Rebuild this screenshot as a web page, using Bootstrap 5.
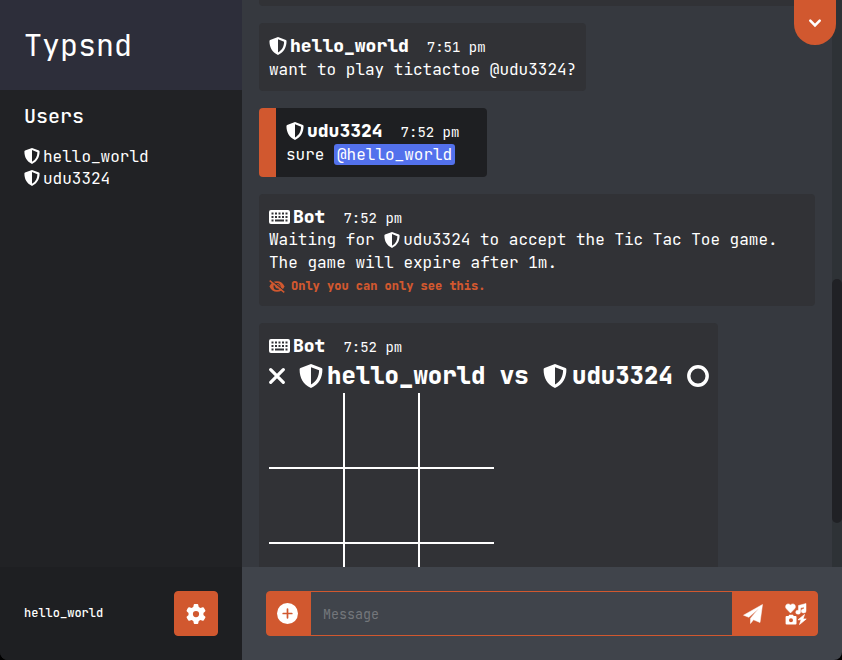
<!DOCTYPE html>
<html lang="en">
<head>
<meta charset="utf-8">
<title>Typsnd</title>
<link href="https://cdn.jsdelivr.net/npm/bootstrap@5.3.0/dist/css/bootstrap.min.css" rel="stylesheet">
<style>
:root{--accent:#d1582f}
body{font-family:"JetBrains Mono","DejaVu Sans Mono","Liberation Mono",monospace;font-size:16px;line-height:23px;color:#fff;background:#000;font-variant-ligatures:none}
svg{fill:currentColor;display:block;flex:none}
.app{height:660px;width:842px;border-radius:0 0 8px 8px}
.side{width:242px;background:#212225}
.brand{height:90px;background:#2d2e3a;font-size:30px;line-height:36px;padding-left:24px}
.users{padding:14px 24px 0}
.users h2{font-size:20px;line-height:24px;margin:0 0 17px;font-weight:500}
.user{height:22px;gap:3px}
.me{height:93px;background:#1e1f22;font-size:12px;font-weight:500;padding:0 24px}
.btn-accent{--bs-btn-bg:var(--accent);--bs-btn-color:#fff;--bs-btn-border-color:var(--accent);--bs-btn-border-radius:4px;background:var(--accent);color:#fff;padding:0;height:45px}
.gear{width:44px}
.feed{height:567px;background:#36393f;padding-left:17px}
.msg{background:#313236;border-radius:4px;padding:11px 10px 0;width:max-content;margin-bottom:17px}
.msg-old{height:6px;width:573px;border-radius:0 0 4px 4px;padding:0}
.msg-mention{background:#1e1f22;border-left:17px solid var(--accent)}
.who{font-size:18px;font-weight:800;line-height:24px;height:24px}
.msg-bot .who{margin-bottom:-1px}
.ico{margin-right:3px}
.stamp{font-size:14px;font-weight:400;margin-left:18px;position:relative;top:1px}
.ping{background:#5371ec;border-radius:3px;padding:1px 3px;line-height:19px;height:21px}
.hint{font-size:12px;font-weight:800;color:var(--accent);gap:6px;margin-top:1px}
.versus{font-size:24px;font-weight:800;height:37px;line-height:37px;white-space:pre}
.board{width:225px;display:grid;grid-template-columns:76px 75px 74px;grid-template-rows:76px 75px 74px;margin-top:-1px}
.board>i{border-right:2px solid #fff;border-bottom:2px solid #fff}
.board>i:nth-child(3n){border-right:0}
.track{width:10px;background:#2e3236;padding-top:279px}
.thumb{height:244px;border-radius:5px;background:#202125}
.jump{position:absolute;left:552px;top:0;width:42px;height:45px;border-radius:0 0 21px 21px;background:var(--accent)}
.compose{height:93px;background:#40444b;padding:24px}
.compose .input-group{height:45px}
.compose .btn-nudge{padding-right:2px}
.compose .form-control{background:#40444b;border-color:var(--accent);border-radius:0;font-size:13.33px;padding:0 12px;color:#fff}
.compose .form-control::placeholder{color:#74777b}
</style>
</head>
<body class="overflow-hidden">
<svg width="0" height="0" class="position-absolute">
<symbol id="shield" viewBox="0 0 16 16"><path fill-rule="evenodd" d="M8 0 15 2.6Q15.6 2.9 15.6 3.6C15.6 9 13.4 13.5 8 16 2.6 13.5.4 9 .4 3.6Q.4 2.9 1 2.6ZM8 2.1V13.7C11.8 11.5 13.300 8.300 13.400 4.200Z"/></symbol>
<symbol id="keys" viewBox="0 0 21 14"><path fill-rule="evenodd" d="M2 0H19Q21 0 21 2V12Q21 14 19 14H2Q0 14 0 12V2Q0 0 2 0ZM2.500 2.500V4.500H4.500V2.500ZM6 2.500V4.500H8V2.500ZM9.500 2.500V4.500H11.500V2.500ZM13 2.500V4.500H15V2.500ZM16.500 2.500V4.500H18.500V2.500ZM2.500 6V8H4.500V6ZM6 6V8H8V6ZM9.500 6V8H11.500V6ZM13 6V8H15V6ZM16.500 6V8H18.500V6ZM2.500 9.500V11.500H4.500V9.500ZM6 9.500V11.500H15V9.500ZM16.500 9.500V11.500H18.500V9.500Z"/></symbol>
</svg>
<div class="app d-flex overflow-hidden">
<aside class="side d-flex flex-column">
<div class="brand d-flex align-items-center">Typsnd</div>
<div class="users flex-grow-1">
<h2>Users</h2>
<div class="user d-flex align-items-center"><svg width="16" height="16"><use href="#shield"/></svg>hello_world</div>
<div class="user d-flex align-items-center"><svg width="16" height="16"><use href="#shield"/></svg>udu3324</div>
</div>
<div class="me d-flex align-items-center justify-content-between">hello_world
<button class="btn btn-accent gear d-flex align-items-center justify-content-center" aria-label="Settings"><svg width="20" height="20" viewBox="0 0 512 512"><path d="M495.900 166.600c3.200 8.700.5 18.400-6.400 24.600l-43.300 39.400c1.100 8.300 1.700 16.800 1.700 25.400s-.6 17.100-1.700 25.400l43.300 39.400c6.900 6.200 9.600 15.900 6.400 24.600-10 27-28 57-46 76-6 7-15 9-24 6l-55.700-17.700c-13.400 10.300-28.200 18.900-44 25.400l-12.500 57.100c-2 9.100-9 16.300-18.200 17.800-26 3-52 3-78 0-9.200-1.500-16.200-8.700-18.200-17.800l-12.500-57.100c-15.800-6.500-30.600-15.100-44-25.400L86 427c-8.800 2.800-18.600.3-24.500-6.800-18-20-35-49-45-75-3.200-8.700-.5-18.400 6.400-24.600l43.300-39.400C65 273 64 265 64 256s1-17 2-25l-43-40c-7-6-10-16-7-24 10-27 28-57 46-76 6-7 16-9 24-6l56 17c13-10 28-19 44-25l12-57c2-9 9-17 19-18 26-3 52-3 78 0 9 2 16 9 18 18l13 57c15 6 30 15 44 25l55-17c9-3 19-1 25 6 18 20 36 49 46 75.600zM256 336a80 80 0 1 0 0-160 80 80 0 1 0 0 160z"/></svg></button>
</div>
</aside>
<main class="position-relative flex-grow-1">
<div class="feed d-flex justify-content-between overflow-hidden">
<div>
<div class="msg msg-old"></div>
<div class="msg" style="height:68px">
<div class="who d-flex align-items-center"><svg width="18" height="18" class="ico"><use href="#shield"/></svg>hello_world<span class="stamp">7:51 pm</span></div>
<div>want to play tictactoe @udu3324?</div></div>
<div class="msg msg-mention" style="height:69px;width:228px">
<div class="who d-flex align-items-center"><svg width="18" height="18" class="ico"><use href="#shield"/></svg>udu3324<span class="stamp">7:52 pm</span></div>
<div class="d-flex align-items-center">sure&nbsp;<span class="ping">@hello_world</span></div></div>
<div class="msg msg-bot" style="height:112px;width:556px">
<div class="who d-flex align-items-center"><svg width="21" height="14" class="ico"><use href="#keys"/></svg>Bot<span class="stamp">7:52 pm</span></div>
<div class="d-flex align-items-center">Waiting for&nbsp;<svg width="16" height="16" class="ico"><use href="#shield"/></svg>udu3324 to accept the Tic Tac Toe game.</div>
<div>The game will expire after 1m.</div>
<div class="hint d-flex align-items-center"><svg width="16" height="13" viewBox="0 0 16 13"><path fill-rule="evenodd" d="M.4 6.500C2 3 4.600 1.200 8 1.200s6 1.800 7.600 5.300C14 10 11.400 11.800 8 11.800S2 10 .4 6.500ZM8 3a3.500 3.500 0 1 0 0 7 3.500 3.500 0 0 0 0-7Z"/><circle cx="8.600" cy="6.300" r="2.300"/><path d="M1 -.6 15.600 11.100" stroke="#313236" stroke-width="1.200"/><path d="M.7.6 15.300 12.400" stroke="currentColor" stroke-width="1.500"/></svg>Only you can only see this.</div></div>
<div class="msg msg-bot mb-0" style="width:459px;height:310px">
<div class="who d-flex align-items-center"><svg width="21" height="14" class="ico"><use href="#keys"/></svg>Bot<span class="stamp">7:52 pm</span></div>
<div class="versus d-flex align-items-center"><svg width="16" height="16" viewBox="0 0 16 16"><path d="M1.700 1.700 14.300 14.300M14.300 1.700 1.700 14.300" stroke="#fff" stroke-width="3.200" stroke-linecap="round"/></svg><svg width="24" height="24" style="margin-left:14px;margin-right:4px"><use href="#shield"/></svg>hello_world vs <svg width="24" height="24" style="margin-right:5px"><use href="#shield"/></svg>udu3324 <svg width="22" height="22" viewBox="0 0 22 22"><circle cx="11" cy="11" r="9.200" fill="none" stroke="#fff" stroke-width="3.400"/></svg></div>
<div class="board"><i></i><i></i><i></i><i></i><i></i><i></i><i></i><i></i><i></i></div></div>
</div>
<div class="track"><div class="thumb"></div></div>
</div>
<div class="jump d-flex align-items-center justify-content-center"><svg width="14" height="10" viewBox="0 0 14 10"><path d="M2.300 2.600 7 7.300 11.700 2.600" fill="none" stroke="#fff" stroke-width="2.600" stroke-linecap="round"/></svg></div>
<div class="compose"><div class="input-group flex-nowrap">
<button class="btn btn-accent btn-nudge d-flex align-items-center justify-content-center" style="width:45px" aria-label="Attach"><svg width="21" height="21" viewBox="0 0 22 22"><circle cx="11" cy="11" r="11"/><path d="M11 6.500V15.500M6.500 11H15.500" stroke="#d1582f" stroke-width="1.800" stroke-linecap="round"/></svg></button>
<input class="form-control h-100" placeholder="Message" aria-label="Message">
<button class="btn btn-accent btn-nudge d-flex align-items-center justify-content-center" style="width:43px" aria-label="Send"><svg width="20" height="20" viewBox="0 0 20 20"><path d="M19.500.5 17 18.500 10.500 15.800 7.500 19.500V14.300L15.800 4.500 5.800 13.300.5 11.200Z" stroke="#fff" stroke-width=".5" stroke-linejoin="round"/></svg></button>
<button class="btn btn-accent d-flex align-items-center justify-content-center" style="width:44px" aria-label="Media"><svg width="22" height="22" viewBox="0 0 22 22"><path d="M5.500 10 1.400 5.800C-1 3 2.200-1 5.500 1.900 8.800-1 12 3 9.600 5.800ZM13.500 2.500 21 .5V7.700A2.400 2 0 1 1 19 6V4L15.500 5V9A2.400 2 0 1 1 13.500 7.200Z" stroke="#fff" stroke-width=".5"/><path fill-rule="evenodd" d="M1.600 13H3.500L4.200 11.800H8L8.700 13H10.500Q11.500 13 11.500 14V20.500Q11.500 21.500 10.500 21.500H1.600Q.6 21.500.6 20.500V14Q.6 13 1.600 13ZM6 15.200a2 2 0 1 0 0 4 2 2 0 0 0 0-4Z"/><path d="M19.500 11.500 13 16.800H16.200L14.500 21.500 21.200 16H18Z" stroke="#fff" stroke-width=".7"/></svg></button>
</div></div>
</main>
</div>
<script src="https://cdn.jsdelivr.net/npm/bootstrap@5.3.0/dist/js/bootstrap.bundle.min.js"></script>
</body>
</html>
